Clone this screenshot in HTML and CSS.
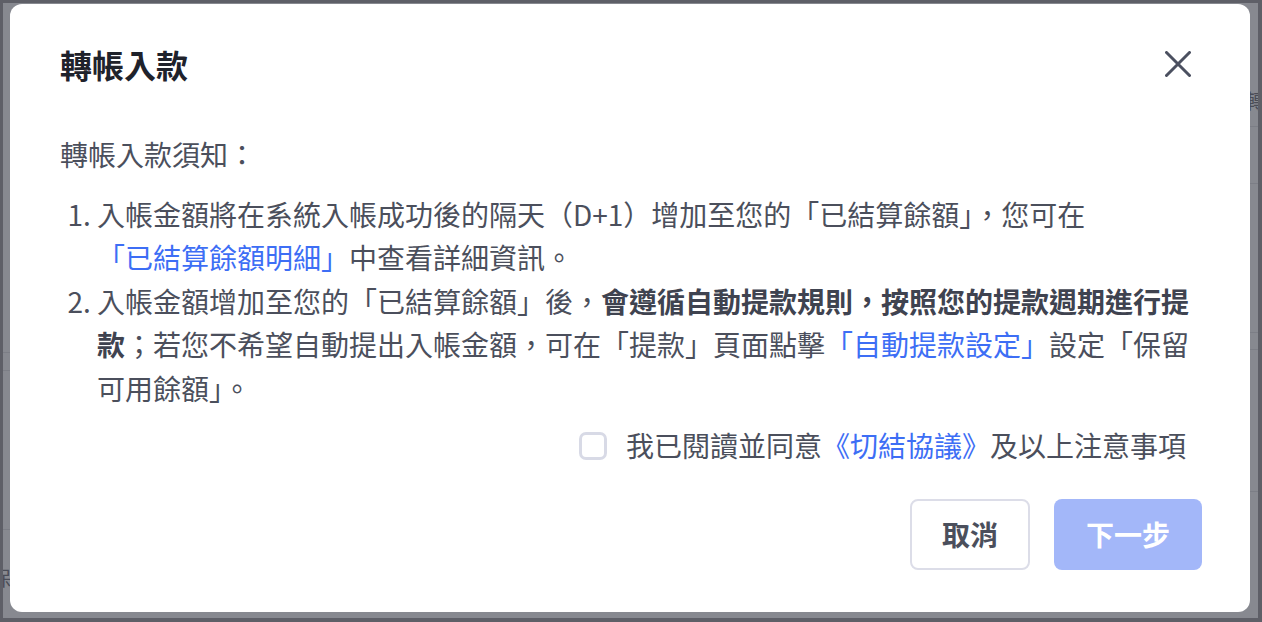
FILE: index.html
```html
<!DOCTYPE html>
<html lang="zh-Hant">
<head>
<meta charset="utf-8">
<title>轉帳入款</title>
<link rel="stylesheet" href="styles.css">
</head>
<body>
<div class="frame">
  <div class="backdrop">
    <div class="side side-left">
      <div class="gap" style="height:152px"></div>
      <div class="row" style="height:198px"></div>
      <div class="row" style="height:18px"></div>
      <div class="row" style="height:159px"></div>
      <div class="side-text">保</div>
    </div>
    <div class="side side-right">
      <div class="gap" style="height:73px"></div>
      <div class="row row-text" style="height:51px"><span>轉帳</span></div>
      <div class="row" style="height:57px"></div>
      <div class="row" style="height:149px"></div>
      <div class="row" style="height:17px"></div>
      <div class="row" style="height:142px"></div>
    </div>
  </div>

  <div class="modal">
    <div class="modal-header">
      <h2 class="modal-title">轉帳入款</h2>
      <button class="close" aria-label="close">
        <svg width="26" height="26" viewBox="0 0 26 26"><path d="M1.5 1.5 L24.5 24.5 M24.5 1.5 L1.5 24.5" stroke="#4b5060" stroke-width="3" stroke-linecap="round" fill="none"/></svg>
      </button>
    </div>
    <div class="modal-body">
      <p class="intro">轉帳入款須知：</p>
      <ol class="notes">
        <li>入帳金額將在系統入帳成功後的隔天（D+1）增加至您的「已結算餘額」，您可在<a class="link">「已結算餘額明細」</a>中查看詳細資訊。</li>
        <li>入帳金額增加至您的「已結算餘額」後，<strong>會遵循自動提款規則，按照您的提款週期進行提款</strong>；若您不希望自動提出入帳金額，可在「提款」頁面點擊<a class="link">「自動提款設定」</a>設定「保留可用餘額」。</li>
      </ol>
      <label class="agree">
        <span class="checkbox"></span>
        <span>我已閱讀並同意<a class="link">《切結協議》</a>及以上注意事項</span>
      </label>
    </div>
    <div class="modal-footer">
      <button class="btn btn-cancel">取消</button>
      <button class="btn btn-next">下一步</button>
    </div>
  </div>
</div>
</body>
</html>
```

FILE: styles.css
```css
* { box-sizing: border-box; }
html, body { margin: 0; padding: 0; }
body {
  width: 1262px;
  height: 622px;
  overflow: hidden;
  background: #5e5f67;
  font-family: "Noto Sans CJK TC", "Noto Sans", sans-serif;
}
.frame {
  position: relative;
  width: 1262px;
  height: 622px;
  padding: 3px 4px 4px 3px;
}
.backdrop {
  height: 100%;
  background: #878990;
  display: flex;
  justify-content: space-between;
  overflow: hidden;
}
.side { display: flex; flex-direction: column; }
.side-left { width: 7px; }
.side-right { width: 12px; }
.row { border-bottom: 1px solid #7c7e86; }
.row-text { position: relative; }
.row-text span {
  display: block;
  margin-top: 14px;
  margin-left: -1px;
  font-size: 20px;
  color: #4a4c56;
  white-space: nowrap;
  line-height: 22px;
}
.side-text {
  margin-top: 36px;
  margin-left: -12px;
  font-size: 20px;
  color: #4a4c56;
  line-height: 24px;
}

.modal {
  position: absolute;
  left: 10px;
  top: 4px;
  width: 1240px;
  height: 608px;
  background: #fff;
  border-radius: 12px;
  padding: 38px 48px 41px 50px;
  display: flex;
  flex-direction: column;
}
.modal-header {
  display: flex;
  justify-content: space-between;
  align-items: center;
  height: 44px;
}
.modal-title {
  margin: 0;
  font-size: 32px;
  line-height: 44px;
  font-weight: 700;
  color: #1f222b;
}
.close {
  border: 0;
  background: none;
  padding: 0;
  width: 26px;
  height: 26px;
  margin-right: 11px;
  margin-top: 0;
  display: flex;
}
.modal-body {
  font-size: 28px;
  line-height: 43.5px;
  color: #4b4f5c;
}
.intro {
  margin: 47px 0 16px 0;
}
.notes {
  margin: 0;
  padding-left: 37px;
}
.notes strong { font-weight: 700; color: #3f4350; }
.link {
  color: #3d6ef5;
  white-space: nowrap;
  cursor: pointer;
}
.agree {
  margin-top: 14px;
  margin-right: 16px;
  display: flex;
  justify-content: flex-end;
  align-items: center;
  gap: 19px;
}
.checkbox {
  width: 28px;
  height: 28px;
  border: 3px solid #d8dae6;
  border-radius: 7px;
  flex: none;
}
.modal-footer {
  margin-top: 31px;
  display: flex;
  justify-content: flex-end;
  gap: 24px;
}
.btn {
  height: 71px;
  font-family: inherit;
  font-size: 28px;
  font-weight: 700;
  border-radius: 8px;
  line-height: 1;
}
.btn-cancel {
  background: #fff;
  border: 2px solid #dcdde8;
  color: #4b4f5c;
  width: 120px;
  padding: 0;
}
.btn-next {
  background: #a3b7f9;
  border: 0;
  color: #fff;
  width: 148px;
  padding: 0;
}
```
